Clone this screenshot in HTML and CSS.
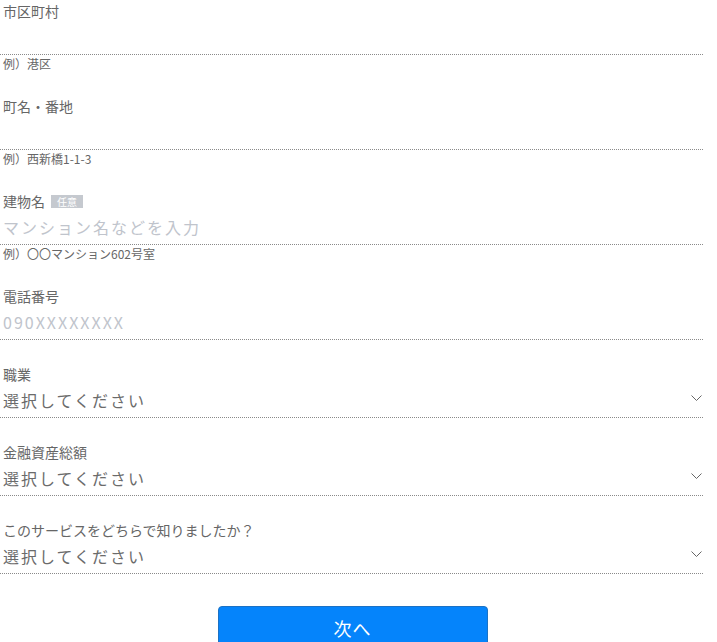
FILE: index.html
```html
<!DOCTYPE html>
<html lang="ja">
<head>
<meta charset="utf-8">
<title>フォーム</title>
<link rel="stylesheet" href="styles.css">
</head>
<body>
<form class="form">
  <div class="field">
    <label class="label">市区町村</label>
    <input class="input" type="text">
    <p class="example">例）港区</p>
  </div>
  <div class="field">
    <label class="label">町名・番地</label>
    <input class="input" type="text">
    <p class="example">例）西新橋1-1-3</p>
  </div>
  <div class="field">
    <label class="label">建物名<span class="badge">任意</span></label>
    <input class="input" type="text" placeholder="マンション名などを入力">
    <p class="example">例）〇〇マンション602号室</p>
  </div>
  <div class="field">
    <label class="label">電話番号</label>
    <input class="input" type="tel" placeholder="090XXXXXXXX">
  </div>
  <div class="field">
    <label class="label">職業</label>
    <div class="select-wrap">
      <select class="select"><option>選択してください</option></select>
      <svg class="chevron" width="12" height="7" viewBox="0 0 12 7"><polyline points="0.5,0.5 5.5,5.5 10.5,0.5" fill="none" stroke="#666" stroke-width="1"/></svg>
    </div>
  </div>
  <div class="field">
    <label class="label">金融資産総額</label>
    <div class="select-wrap">
      <select class="select"><option>選択してください</option></select>
      <svg class="chevron" width="12" height="7" viewBox="0 0 12 7"><polyline points="0.5,0.5 5.5,5.5 10.5,0.5" fill="none" stroke="#666" stroke-width="1"/></svg>
    </div>
  </div>
  <div class="field">
    <label class="label">このサービスをどちらで知りましたか？</label>
    <div class="select-wrap">
      <select class="select"><option>選択してください</option></select>
      <svg class="chevron" width="12" height="7" viewBox="0 0 12 7"><polyline points="0.5,0.5 5.5,5.5 10.5,0.5" fill="none" stroke="#666" stroke-width="1"/></svg>
    </div>
  </div>
  <div class="actions">
    <button class="button" type="button">次へ</button>
  </div>
</form>
</body>
</html>
```

FILE: styles.css
```css
html, body {
  margin: 0;
  padding: 0;
  background: #fff;
}
body {
  padding-top: 1px;
  font-family: "Noto Sans CJK JP", "Noto Sans", sans-serif;
  color: #666;
}
.form {
  width: 703px;
  display: flex;
  flex-direction: column;
}
.field {
  display: flex;
  flex-direction: column;
  margin-bottom: 24px;
}
.label {
  display: flex;
  align-items: center;
  height: 20px;
  font-size: 14px;
  line-height: 20px;
  padding-left: 3px;
  color: #666;
}
.badge {
  display: inline-block;
  margin-left: 6px;
  height: 13px;
  line-height: 13px;
  padding: 0 6px;
  font-size: 10px;
  color: #fff;
  background: #c5c9cf;
}
.input,
.select {
  display: block;
  box-sizing: border-box;
  width: 100%;
  height: 32px;
  margin: 2px 0 0 0;
  padding: 0 0 3px 3px;
  border: none;
  border-bottom: 1px dotted #8a8a8a;
  border-radius: 0;
  outline: none;
  background: transparent;
  font-family: "Noto Sans CJK JP", "Noto Sans", sans-serif;
  font-size: 16px;
  letter-spacing: 2px;
  color: #6b6b6b;
}
.input::placeholder {
  color: #c0c4cc;
}
.select {
  appearance: none;
  -webkit-appearance: none;
}
.select-wrap {
  position: relative;
}
.chevron {
  position: absolute;
  right: 0;
  top: 11px;
  pointer-events: none;
}
.example {
  margin: 0;
  padding-left: 3px;
  font-size: 12px;
  line-height: 17px;
  color: #666;
}
.actions {
  display: flex;
  justify-content: center;
  padding: 8px 0 0 2px;
}
.button {
  width: 270px;
  height: 44px;
  border: 1px solid #1c72c4;
  border-radius: 4px;
  background: #0584fb;
  color: #fff;
  font-family: "Noto Sans CJK JP", "Noto Sans", sans-serif;
  font-size: 18px;
  letter-spacing: 1px;
}
```
